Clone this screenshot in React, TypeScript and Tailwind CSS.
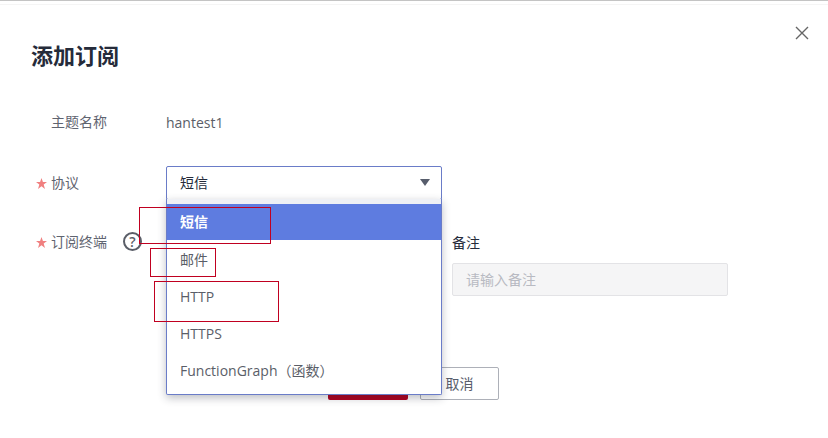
const font = { fontFamily: '"Open Sans", "Noto Sans CJK SC", sans-serif' };

const options = ["短信", "邮件", "HTTP", "HTTPS", "FunctionGraph（函数）"];

function Label({ text, required }: { text: string; required?: boolean }) {
  return (
    <div className="flex items-center w-[134px] shrink-0 text-sm text-[#5f6470]">
      <span className="flex items-center w-[19px] pl-[4px]">
        {required && (
          <svg width="11" height="11" viewBox="0 0 20 20" fill="#f08080">
            <path d="M10 0l2.6 7.4H20l-6 4.6 2.3 8L10 15.2 3.7 20 6 12 0 7.4h7.4z" />
          </svg>
        )}
      </span>
      <span>{text}</span>
    </div>
  );
}

export default function App() {
  return (
    <div className="relative w-[828px] h-[438px] overflow-hidden bg-white border-t border-[#c4c4c4]" style={font}>
      <div className="h-1 border-b border-[#f5f5f5]" />
      <button className="absolute right-[19px] top-[25px] text-[#666]">
        <svg width="14" height="14" viewBox="0 0 14 14" fill="none" stroke="currentColor" strokeWidth="1.4">
          <path d="M1 1l12 12M13 1L1 13" />
        </svg>
      </button>

      <div className="pl-8 pt-[35px]">
        <h1 className="-ml-px text-[22px] leading-[30px] font-semibold text-[#252b3a]">添加订阅</h1>

        <div className="flex items-center mt-[38px] h-[30px]">
          <div className="-mt-[3px]">
            <Label text="主题名称" />
          </div>
          <span className="text-sm text-[#5a5e68]">hantest1</span>
        </div>

        <div className="flex items-center mt-[28px] h-[34px]">
          <Label text="协议" required />
          <div className="flex items-center justify-between w-[276px] h-[34px] px-[13px] pb-px border border-[#6a7cc8] rounded-[2px] text-sm text-[#252b3a] bg-white">
            <span>短信</span>
            <span className="w-0 h-0 border-x-[5px] border-x-transparent border-t-[7px] border-t-[#575d6c] -mr-[2px]" />
          </div>
        </div>

        <div className="flex mt-[33px]">
          <div className="flex items-start h-[34px] -mt-px">
            <Label text="订阅终端" required />
          </div>
          <div className="ml-[286px] w-[276px]">
            <div className="text-sm leading-5 text-[#252b3a]">备注</div>
            <div className="flex items-center mt-[10px] h-[33px] px-[13px] bg-[#f5f5f6] border border-[#e3e3e6] rounded-[2px] text-sm text-[#b8bac2]">
              请输入备注
            </div>
          </div>
        </div>

        <div className="flex gap-3 ml-[296px] mt-[71px]">
          <button className="w-20 h-[33px] rounded-[2px] bg-[#b1001f]" />
          <button className="w-[79px] h-[33px] rounded-[2px] border border-[#adb0b8] text-sm text-[#575d6c] bg-white">取消</button>
        </div>
      </div>

      {/* help icon */}
      <div className="absolute left-[123px] top-[231px] flex items-center justify-center w-[19px] h-[19px] rounded-full border-2 border-[#5a5e68] text-sm font-semibold text-[#5a5e68]">?</div>

      {/* open dropdown */}
      <div className="absolute left-[166px] top-[198px] w-[276px] h-[196px] bg-white border border-[#6a7cc8] border-t-0 rounded-b-[2px] shadow-[0_3px_8px_rgba(37,43,58,0.3)] text-sm text-[#5a5e68]">
        <div className="h-[5px] bg-[#eef0f5]" />
        {options.map((o, i) => (
          <div key={o} className={i === 0 ? "flex items-center h-9 px-[13px] mb-px bg-[#5e7ce0] text-white font-semibold" : "flex items-center h-[37px] px-[13px]"}>
            {o}
          </div>
        ))}
      </div>

      {/* red annotation boxes */}
      <div className="absolute left-[139px] top-[206px] w-[132px] h-[37px] border border-[#c00020]" />
      <div className="absolute left-[150px] top-[247px] w-[66px] h-[29px] border border-[#c00020]" />
      <div className="absolute left-[154px] top-[280px] w-[125px] h-[41px] border border-[#c00020]" />
    </div>
  );
}
